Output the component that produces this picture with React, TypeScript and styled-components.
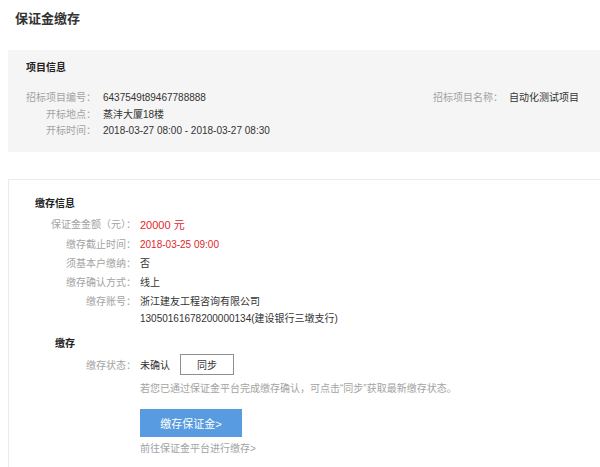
import React from 'react'
import styled, { createGlobalStyle } from 'styled-components'

const GlobalStyle = createGlobalStyle`
  html, body {
    margin: 0;
    padding: 0;
    background: #fff;
  }
  body {
    font-family: "Liberation Sans", "Noto Sans CJK SC", sans-serif;
    font-size: 10px;
    color: #333;
  }
`

const Page = styled.div`
  width: 600px;
  overflow: hidden;
`

const PageTitle = styled.h1`
  margin: 0;
  padding: 9px 15px;
  font-size: 13px;
  line-height: 20px;
  font-weight: 700;
  color: #333;
`

const InfoPanel = styled.section`
  margin: 12px 0 0 8px;
  padding: 10px 0 12px 18px;
  background: #f5f5f5;
`

const SectionTitle = styled.h2<{ $indent?: number }>`
  margin: 0;
  padding-left: ${p => p.$indent ?? 0}px;
  font-size: 10px;
  line-height: 16px;
  font-weight: 700;
  color: #222;
`

const InfoGrid = styled.div`
  display: grid;
  grid-template-columns: 407px 1fr;
  margin-top: 14px;
`

const Column = styled.div`
  display: flex;
  flex-direction: column;
`

const Row = styled.div<{ $height?: number }>`
  display: flex;
  align-items: flex-start;
  line-height: ${p => p.$height ?? 16.5}px;
`

const Label = styled.span<{ $width: number }>`
  flex: none;
  width: ${p => p.$width}px;
  text-align: right;
  color: #a3a3a3;
`

const Value = styled.span<{ $gap: number; $tone?: 'red' }>`
  margin-left: ${p => p.$gap}px;
  color: ${p => (p.$tone === 'red' ? '#e2262a' : '#333')};
`

const Amount = styled(Value)`
  font-size: 11px;
`

const AccountValue = styled(Value)`
  line-height: 17px;
  padding-top: 1px;
`

const DepositPanel = styled.section`
  margin: 27px -2px 0 8px;
  padding: 16px 0 20px 26px;
  border: 1px solid #ebebeb;
`

const FieldList = styled.div`
  display: flex;
  flex-direction: column;
  margin-top: 3px;
`

const SubSection = styled.div`
  margin-top: 9px;
`

const StatusRow = styled.div`
  display: flex;
  align-items: center;
  margin-top: 2px;
  height: 21px;
`

const SyncButton = styled.button`
  margin-left: 10px;
  width: 54px;
  height: 21px;
  padding: 0;
  border: 1px solid #8f8f8f;
  background: #fff;
  font-family: inherit;
  font-size: 10px;
  color: #333;
  cursor: pointer;
`

const ActionBlock = styled.div`
  display: flex;
  flex-direction: column;
  align-items: flex-start;
  padding-left: 105px;
`

const Hint = styled.p`
  margin: 6px 0 0;
  line-height: 16px;
  color: #a3a3a3;
`

const PrimaryButton = styled.button`
  margin-top: 12px;
  width: 102px;
  height: 28px;
  padding: 0;
  border: none;
  background: #589be0;
  color: #fff;
  font-family: inherit;
  font-size: 11px;
  cursor: pointer;
`

const PlatformLink = styled.a`
  margin-top: 4px;
  line-height: 16px;
  color: #a3a3a3;
  text-decoration: none;
`

const projectRows = [
  { label: '招标项目编号：', value: '6437549t89467788888' },
  { label: '开标地点：', value: '蒸沣大厦18楼' },
  { label: '开标时间：', value: '2018-03-27 08:00 - 2018-03-27 08:30' },
]

export default function App() {
  return (
    <Page>
      <GlobalStyle />
      <PageTitle>保证金缴存</PageTitle>

      <InfoPanel>
        <SectionTitle>项目信息</SectionTitle>
        <InfoGrid>
          <Column>
            {projectRows.map(r => (
              <Row key={r.label}>
                <Label $width={70}>{r.label}</Label>
                <Value $gap={7}>{r.value}</Value>
              </Row>
            ))}
          </Column>
          <Column>
            <Row>
              <Label $width={70}>招标项目名称：</Label>
              <Value $gap={6}>自动化测试项目</Value>
            </Row>
          </Column>
        </InfoGrid>
      </InfoPanel>

      <DepositPanel>
        <SectionTitle>缴存信息</SectionTitle>
        <FieldList>
          <Row $height={20}>
            <Label $width={101}>保证金金额（元）：</Label>
            <Amount $gap={4} $tone="red">20000 元</Amount>
          </Row>
          <Row $height={19}>
            <Label $width={101}>缴存截止时间：</Label>
            <Value $gap={4} $tone="red">2018-03-25 09:00</Value>
          </Row>
          <Row $height={19}>
            <Label $width={101}>须基本户缴纳：</Label>
            <Value $gap={4}>否</Value>
          </Row>
          <Row $height={19}>
            <Label $width={101}>缴存确认方式：</Label>
            <Value $gap={4}>线上</Value>
          </Row>
          <Row $height={19}>
            <Label $width={101}>缴存账号：</Label>
            <AccountValue $gap={4}>
              浙江建友工程咨询有限公司
              <br />
              13050161678200000134(建设银行三墩支行)
            </AccountValue>
          </Row>
        </FieldList>

        <SubSection>
          <SectionTitle $indent={20}>缴存</SectionTitle>
          <StatusRow>
            <Label $width={101}>缴存状态：</Label>
            <Value $gap={4}>未确认</Value>
            <SyncButton>同步</SyncButton>
          </StatusRow>
          <ActionBlock>
            <Hint>若您已通过保证金平台完成缴存确认，可点击“同步”获取最新缴存状态。</Hint>
            <PrimaryButton>缴存保证金&gt;</PrimaryButton>
            <PlatformLink href="#">前往保证金平台进行缴存&gt;</PlatformLink>
          </ActionBlock>
        </SubSection>
      </DepositPanel>
    </Page>
  )
}
